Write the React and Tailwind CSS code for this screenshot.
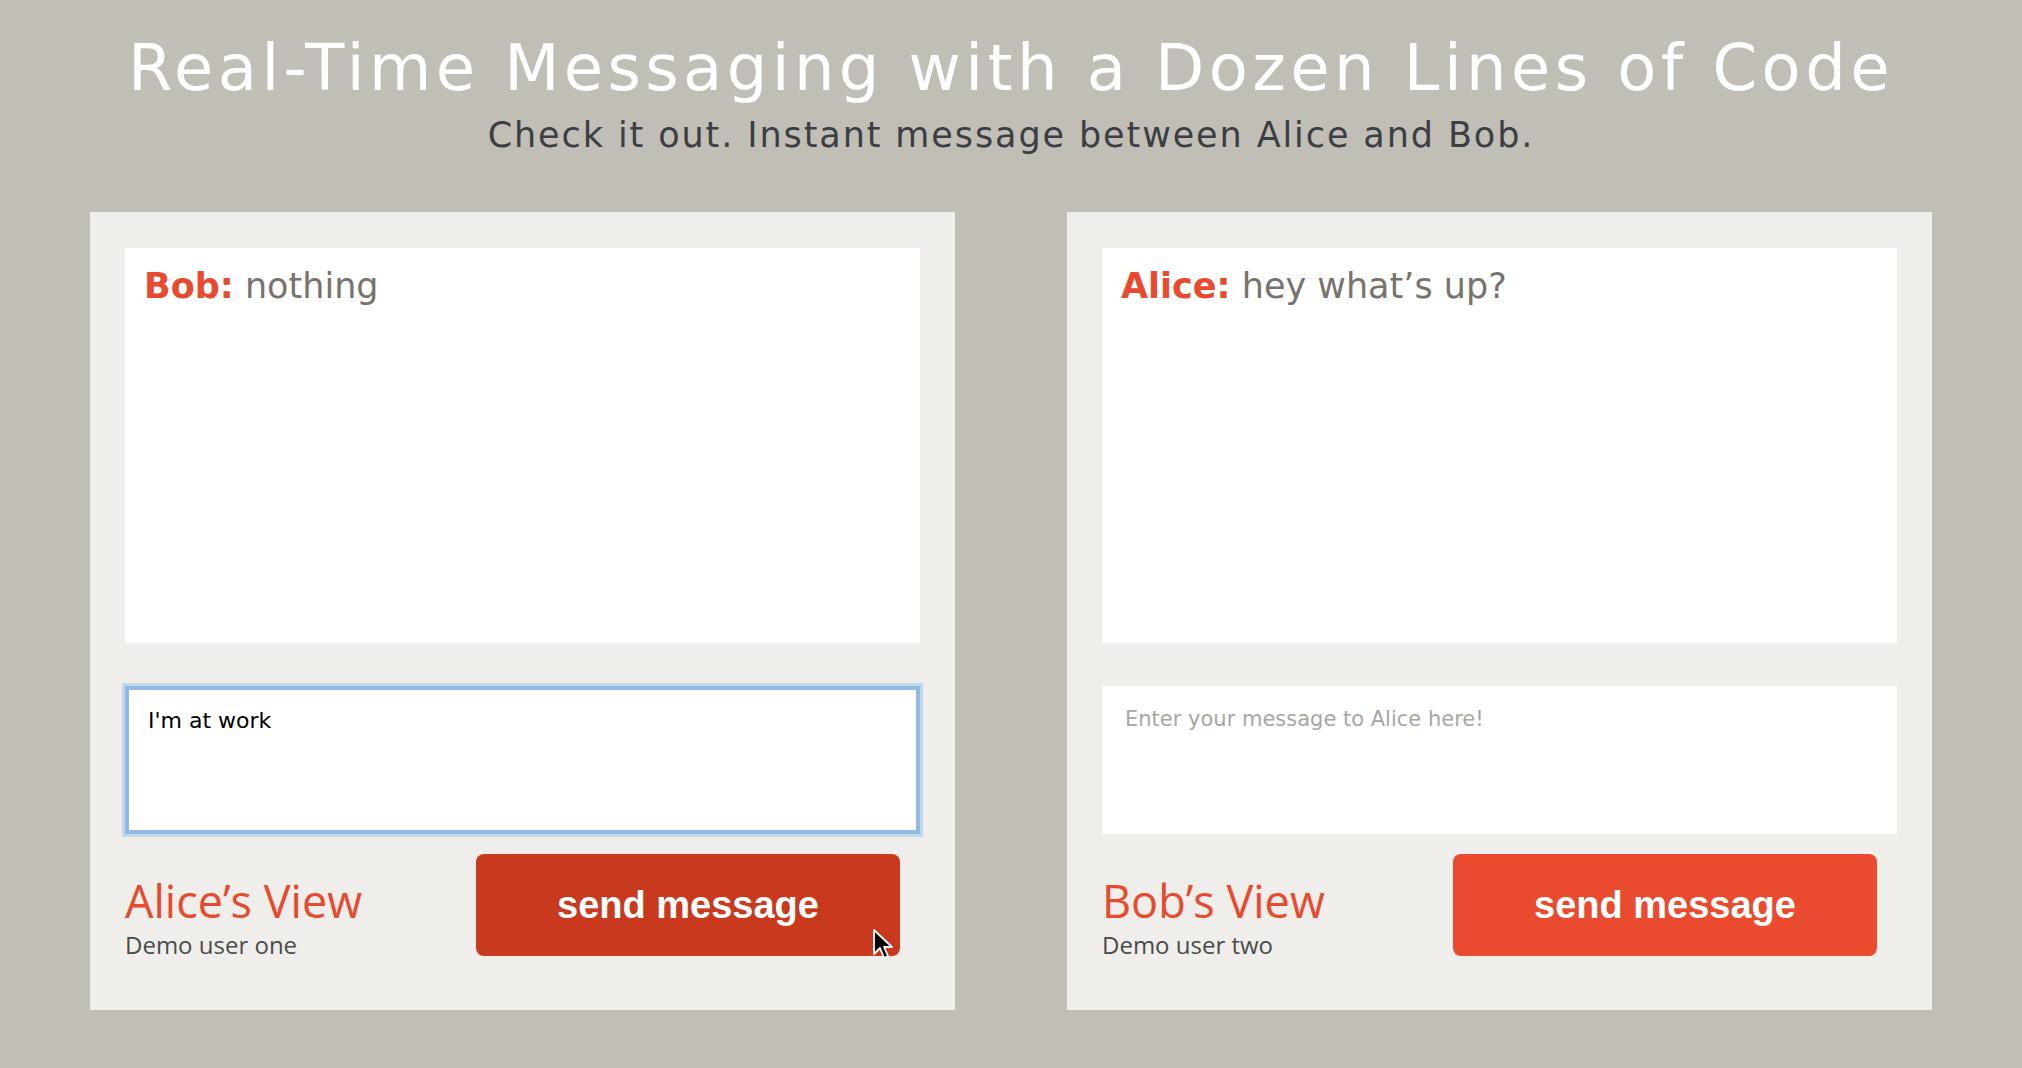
import React from "react";

function ChatPanel({ from, text, draft, placeholder, focused, name, sub, dark }) {
  return (
    <div className="bg-[#efeeea] pt-[36px] px-[35px] pb-[54px]">
      {/* message log */}
      <div className="bg-white h-[395px] px-[19px] pt-[14px]">
        <p className="text-[35px] leading-[48px] font-['DejaVu_Sans',sans-serif]">
          <span className="text-[#e84a2f] font-semibold">{from}:</span>{" "}
          <span className="text-[#77736c]">{text}</span>
        </p>
      </div>

      {/* input */}
      <div
        className={
          focused
            ? "mt-[43px] h-[148px] bg-white border-4 border-[#92b9e4] shadow-[0_0_0_3px_rgba(160,195,235,0.55)] px-[19px] pt-[14px]"
            : "mt-[43px] h-[148px] bg-white px-[23px] pt-[18px]"
        }
      >
        {draft ? (
          <span className="text-[22px] text-black font-['DejaVu_Sans',sans-serif]">{draft}</span>
        ) : (
          <span className="text-[21px] text-[#a8a6a2] font-['DejaVu_Sans',sans-serif]">{placeholder}</span>
        )}
      </div>

      {/* footer */}
      <div className="mt-[20px] flex justify-between items-start pr-[20px] h-[102px]">
        <div className="pt-[22px] h-[102px]">
          <div className="text-[45px] leading-[49px] text-[#e84a2f] font-['Open_Sans',sans-serif]">
            {name}
          </div>
          <div className="text-[24px] leading-[28px] text-[#4b4b4b] font-['Open_Sans',sans-serif] mt-[6px]">
            {sub}
          </div>
        </div>
        <div className="relative">
          <button
            className={
              dark
                ? "w-[424px] h-[102px] rounded-[8px] bg-[#c8391e] text-white text-[38px] font-bold font-['Liberation_Sans',sans-serif]"
                : "w-[424px] h-[102px] rounded-[8px] bg-[#ea4a2e] text-white text-[38px] font-bold font-['Liberation_Sans',sans-serif]"
            }
          >
            send message
          </button>
          {dark && (
            <svg
              className="absolute left-[396px] top-[74px]"
              width="22"
              height="34"
              viewBox="0 0 22 34"
            >
              <path
                d="M2 2 L2 26 L8 20 L12 30 L16 28 L12 19 L20 19 Z"
                fill="#000"
                stroke="#fff"
                strokeWidth="1.8"
                strokeLinejoin="round"
              />
            </svg>
          )}
        </div>
      </div>
    </div>
  );
}

export default function App() {
  return (
    <div className="min-h-[1068px] bg-[#c1beb5] pt-[32px]">
      <div className="text-center">
        <h1 className="text-[64px] leading-[72px] text-white font-['DejaVu_Sans',sans-serif] tracking-[4.4px]">
          Real-Time Messaging with a Dozen Lines of Code
        </h1>
        <p className="text-[35px] leading-[44px] text-[#3b3f44] font-['DejaVu_Sans',sans-serif] tracking-[1.9px] mt-[9px]">
          Check it out. Instant message between Alice and Bob.
        </p>
      </div>

      <div className="grid grid-cols-2 gap-[112px] px-[90px] mt-[55px]">
        <ChatPanel
          from="Bob"
          text="nothing"
          draft="I'm at work"
          focused
          name="Alice’s View"
          sub="Demo user one"
          dark
        />
        <ChatPanel
          from="Alice"
          text="hey what’s up?"
          placeholder="Enter your message to Alice here!"
          name="Bob’s View"
          sub="Demo user two"
        />
      </div>
    </div>
  );
}
